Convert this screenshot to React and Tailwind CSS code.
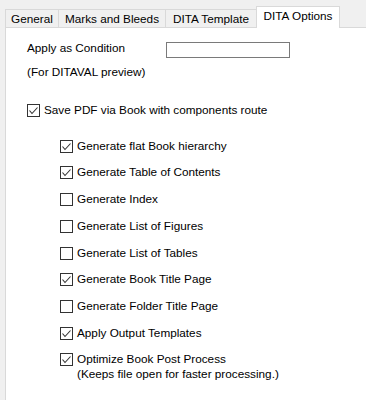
import React from "react";

function Box({ checked }) {
  return (
    <span className="w-[13px] h-[13px] border border-[#333333] bg-white flex-none flex items-center justify-center">
      {checked && (
        <svg width="11" height="11" viewBox="0 0 11 11">
          <polyline points="1.5,5.5 4,8.5 9.5,2.5" fill="none" stroke="#333333" strokeWidth="1.1" />
        </svg>
      )}
    </span>
  );
}

const items = [
  { t: "Generate flat Book hierarchy", c: true, m: "mt-[20px]" },
  { t: "Generate Table of Contents", c: true, m: "mt-[10px]" },
  { t: "Generate Index", c: false, m: "mt-[11px]" },
  { t: "Generate List of Figures", c: false, m: "mt-[11px]" },
  { t: "Generate List of Tables", c: false, m: "mt-[11px]" },
  { t: "Generate Book Title Page", c: true, m: "mt-[10px]" },
  { t: "Generate Folder Title Page", c: false, m: "mt-[11px]" },
  { t: "Apply Output Templates", c: true, m: "mt-[11px]" },
];

export default function App() {
  return (
    <div className="w-[366px] h-[400px] bg-[#f0f0f0] overflow-hidden text-[11.75px] text-black font-['Liberation_Sans',Arial,sans-serif] flex flex-col">
      <div className="flex items-end pl-[5px] h-[27px] flex-none">
        <div className="w-[53px] h-[18px] border-t border-l border-[#d9d9d9] flex items-center justify-center">General</div>
        <div className="w-[107px] h-[18px] border-t border-l border-[#d9d9d9] flex items-center justify-center">Marks and Bleeds</div>
        <div className="w-[91px] h-[18px] border-t border-l border-[#d9d9d9] flex items-center justify-center">DITA Template</div>
        <div className="relative z-10 -mb-px w-[84px] h-[22px] bg-white border-t border-l border-r border-[#d9d9d9] flex items-center justify-center pb-[3px]">DITA Options</div>
      </div>
      <div className="flex-1 ml-[5px] bg-white border-l border-t border-[#d9d9d9] pl-[21px] flex flex-col">
        <div className="mt-[12px] flex items-start">
          <div className="h-[16px] leading-[16px] w-[139px]">Apply as Condition</div>
          <div className="mt-[2px] w-[124px] h-[16px] border border-[#7a7a7a] bg-white"></div>
        </div>
        <div className="mt-[6px] h-[16px] leading-[16px]">(For DITAVAL preview)</div>
        <div className="mt-[22px] h-[16px] flex items-center gap-[4px]">
          <Box checked />
          <span className="leading-[16px]">Save PDF via Book with components route</span>
        </div>
        <div className="pl-[33px] flex flex-col">
          {items.map((it) => (
            <div key={it.t} className={`${it.m} h-[16px] flex items-center gap-[4px]`}>
              <Box checked={it.c} />
              <span className="leading-[16px]">{it.t}</span>
            </div>
          ))}
          <div className="mt-[10px] flex items-start gap-[4px]">
            <div className="h-[16px] flex items-center">
              <Box checked />
            </div>
            <div className="flex flex-col">
              <span className="leading-[16px]">Optimize Book Post Process</span>
              <span className="leading-[13px]">(Keeps file open for faster processing.)</span>
            </div>
          </div>
        </div>
      </div>
    </div>
  );
}
